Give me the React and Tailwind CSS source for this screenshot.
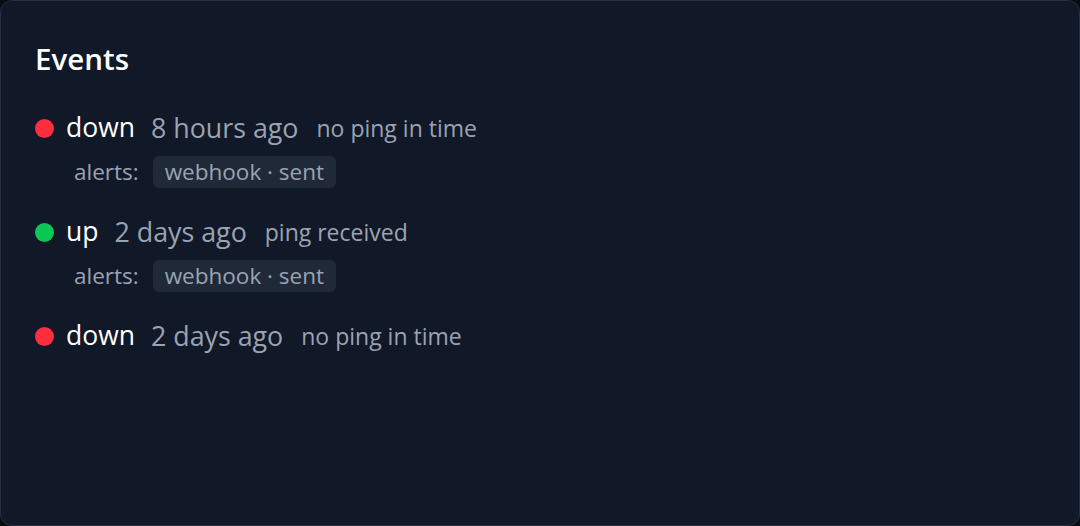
import React from 'react';

const events = [
  { state: 'down', when: '8 hours ago', note: 'no ping in time', alerts: ['webhook · sent'] },
  { state: 'up', when: '2 days ago', note: 'ping received', alerts: ['webhook · sent'] },
  { state: 'down', when: '2 days ago', note: 'no ping in time', alerts: [] },
];

function EventRow({ ev }) {
  const dot = ev.state === 'up' ? 'bg-[#0cc655]' : 'bg-[#ff2e3e]';
  return (
    <li className="flex flex-col gap-[12px]">
      <div className="flex items-center h-[32px]">
        <span className={`w-[19px] h-[19px] rounded-full shrink-0 ${dot}`} />
        <span className="ml-[12px] text-[26.5px] text-white">{ev.state}</span>
        <span className="ml-[16px] text-[26.8px] text-[#9aa3b2]">{ev.when}</span>
        <span className="ml-[18px] text-[23px] text-[#9aa3b2]">{ev.note}</span>
      </div>
      {ev.alerts.length > 0 && (
        <div className="flex items-center h-[32px] pl-[39px]">
          <span className="text-[22.5px] text-[#9aa3b2]">alerts:</span>
          {ev.alerts.map((a) => (
            <span
              key={a}
              className="ml-[14px] h-[32px] flex items-center px-[12px] rounded-[6px] bg-[#1f2937] text-[22.5px] text-[#9aa3b2]"
            >
              {a}
            </span>
          ))}
        </div>
      )}
    </li>
  );
}

export default function App() {
  return (
    <div className="min-h-screen bg-[#090c13]" style={{ fontFamily: '"Open Sans", "Noto Sans", sans-serif' }}>
      <div className="h-[526px] rounded-[12px] border border-[#263041] bg-[#111827] px-[34px] pt-[38px]">
        <h2 className="text-[29.5px] leading-[40px] font-semibold text-white">Events</h2>
        <ul className="mt-[33px] flex flex-col gap-[28px]">
          {events.map((ev, i) => (
            <EventRow key={i} ev={ev} />
          ))}
        </ul>
      </div>
    </div>
  );
}
